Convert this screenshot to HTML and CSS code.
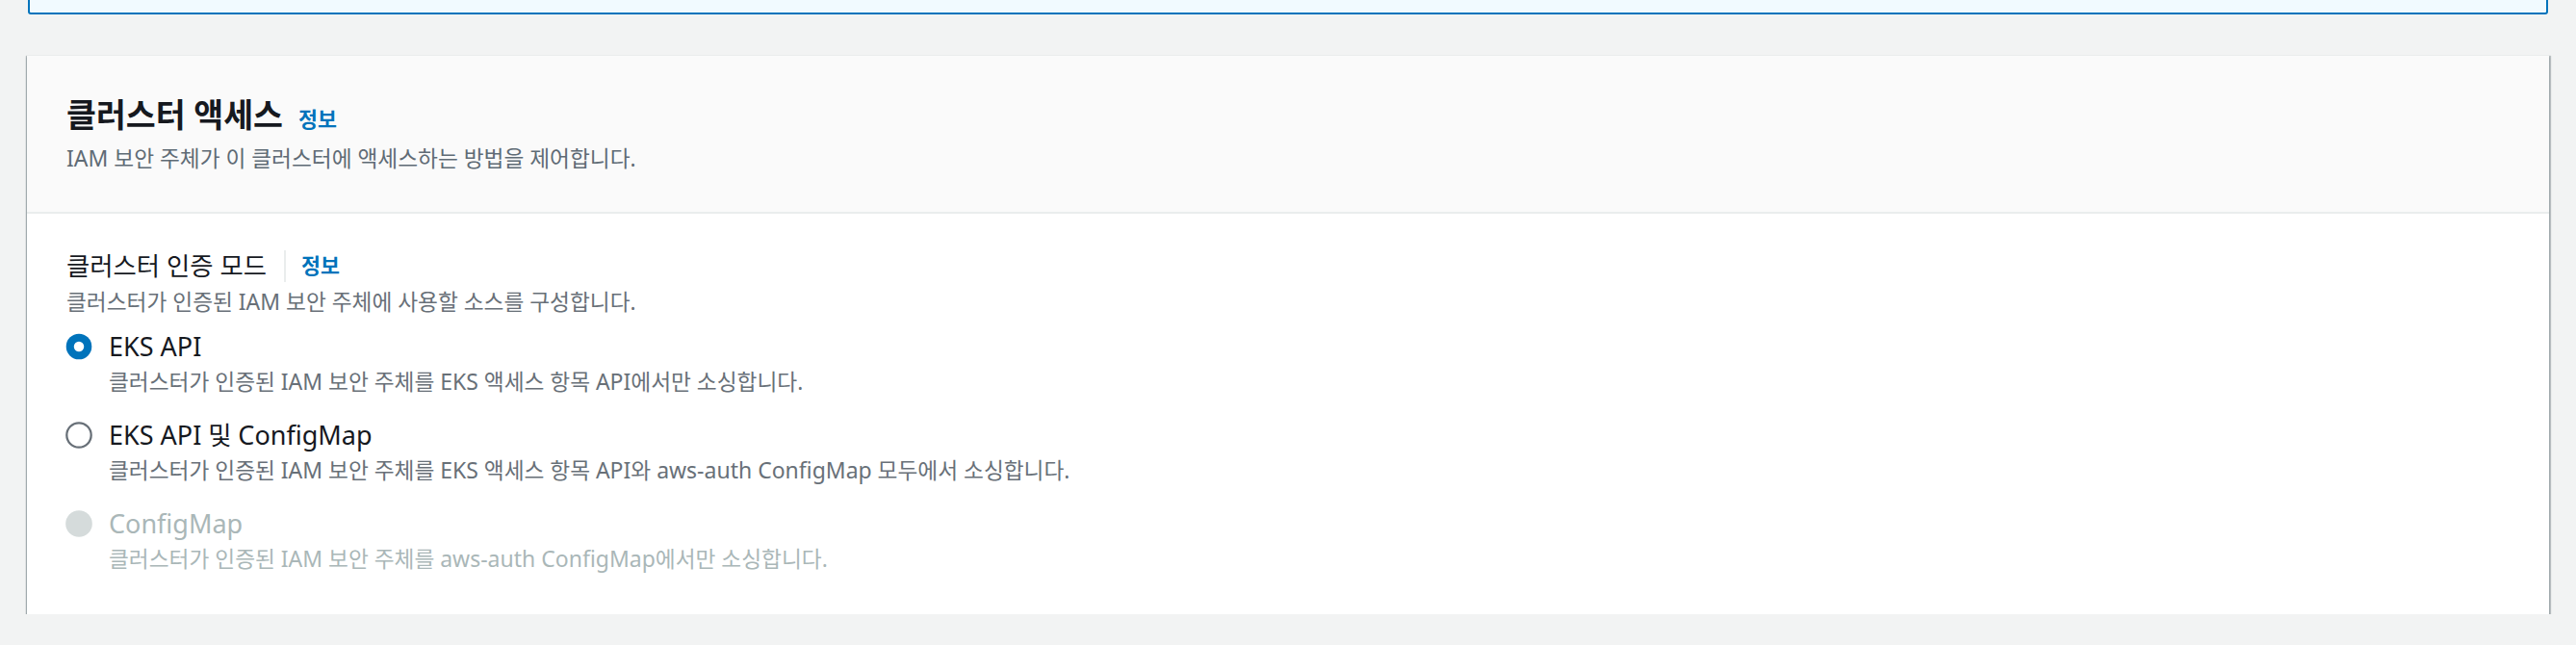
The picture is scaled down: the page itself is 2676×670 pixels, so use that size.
FILE: index.html
```html
<!DOCTYPE html>
<html lang="ko">
<head>
<meta charset="utf-8">
<title>클러스터 액세스</title>
<link rel="stylesheet" href="styles.css">
</head>
<body>
<div class="page">
  <div class="alert"></div>
  <section class="card">
    <header class="card-header">
      <div class="title-row">
        <h2 class="title">클러스터 액세스</h2>
        <a class="info info-title">정보</a>
      </div>
      <p class="desc header-desc"><span class="lat">IAM</span> 보안 주체가 이 클러스터에 액세스하는 방법을 제어합니다.</p>
    </header>
    <div class="card-body">
      <div class="label-row">
        <span class="field-label">클러스터 인증 모드</span>
        <span class="sep"></span>
        <a class="info">정보</a>
      </div>
      <p class="desc field-desc">클러스터가 인증된 <span class="lat">IAM</span> 보안 주체에 사용할 소스를 구성합니다.</p>
      <div class="radio-group">
        <div class="radio-item">
          <div class="radio-row">
            <svg class="radio" viewBox="0 0 16 16" width="28" height="28"><circle cx="8" cy="8" r="7.6" fill="#0073bb"/><circle cx="8" cy="8" r="3" fill="#ffffff"/></svg>
            <span class="radio-label"><span class="lat-l">EKS API</span></span>
          </div>
          <p class="desc radio-desc">클러스터가 인증된 <span class="lat">IAM</span> 보안 주체를 <span class="lat">EKS</span> 액세스 항목 <span class="lat">API</span>에서만 소싱합니다.</p>
        </div>
        <div class="radio-item">
          <div class="radio-row">
            <svg class="radio" viewBox="0 0 16 16" width="28" height="28"><circle cx="8" cy="8" r="7.25" fill="#ffffff" stroke="#687078" stroke-width="1.3"/></svg>
            <span class="radio-label"><span class="lat-l">EKS API</span> 및 <span class="lat-l">ConfigMap</span></span>
          </div>
          <p class="desc radio-desc">클러스터가 인증된 <span class="lat">IAM</span> 보안 주체를 <span class="lat">EKS</span> 액세스 항목 <span class="lat">API</span>와 <span class="lat">aws-auth ConfigMap</span> 모두에서 소싱합니다.</p>
        </div>
        <div class="radio-item disabled">
          <div class="radio-row">
            <svg class="radio" viewBox="0 0 16 16" width="28" height="28"><circle cx="8" cy="8" r="7.9" fill="#d5dbdb"/></svg>
            <span class="radio-label"><span class="lat-l">ConfigMap</span></span>
          </div>
          <p class="desc radio-desc">클러스터가 인증된 <span class="lat">IAM</span> 보안 주체를 <span class="lat">aws-auth ConfigMap</span>에서만 소싱합니다.</p>
        </div>
      </div>
    </div>
  </section>
</div>
</body>
</html>
```

FILE: styles.css
```css
html, body {
  margin: 0;
  padding: 0;
  background: #f2f3f3;
}

body {
  font-family: "Noto Sans", "Noto Sans CJK KR", sans-serif;
  color: #16191f;
  overflow: hidden;
}

.page {
  padding: 0 28px;
}

.alert {
  box-sizing: border-box;
  height: 45px;
  margin: -30px 1px 0;
  background: #f1faff;
  border: 2px solid #0073bb;
  border-radius: 3px;
}

.card {
  margin-top: 42px;
  background: #ffffff;
  border-top: 1px solid #eaeded;
  box-shadow: 0 2px 2px 0 rgba(0, 28, 36, 0.45), 2px 1px 1px 0 rgba(0, 28, 36, 0.22), -1px 1px 1px 0 rgba(0, 28, 36, 0.22);
}

.card-header {
  background: #fafafa;
  padding: 39px 41px 38px;
  border-bottom: 2px solid #eaeded;
}

.title-row {
  display: flex;
  align-items: baseline;
  gap: 16px;
}

.title {
  margin: 0;
  font-size: 33.6px;
  line-height: 44px;
  font-weight: 700;
  color: #16191f;
}

.info {
  font-size: 21.7px;
  line-height: 34px;
  font-weight: 700;
  color: #0073bb;
  text-decoration: none;
}

.desc {
  margin: 0;
  font-size: 22.7px;
  line-height: 34px;
  color: #687078;
  white-space: nowrap;
}

.lat {
  font-size: 23px;
  line-height: 1;
}

.lat-l {
  font-size: 27px;
  line-height: 1;
}

.header-desc {
  margin-top: 7px;
  color: #5f6b75;
}

.card-body {
  padding: 37px 41px 40px;
}

.label-row {
  display: flex;
  align-items: center;
  height: 34px;
}

.field-label {
  font-size: 26.4px;
  line-height: 34px;
  color: #16191f;
}

.sep {
  width: 2px;
  height: 33px;
  margin: 0 16px 0 18px;
  background: #eaeded;
}

.field-desc {
  margin-top: 4px;
}

.radio-group {
  margin-top: 12px;
  display: flex;
  flex-direction: column;
  gap: 21px;
}

.radio-row {
  display: flex;
  align-items: center;
  gap: 17px;
  height: 34px;
}

.radio {
  display: block;
  flex: none;
  margin-left: -1px;
}

.radio-label {
  font-size: 26.4px;
  line-height: 34px;
  color: #16191f;
  white-space: nowrap;
}

.radio-desc {
  margin-top: 3px;
  padding-left: 44px;
}

.disabled .radio-label,
.disabled .radio-desc {
  color: #aab7b8;
}
```
